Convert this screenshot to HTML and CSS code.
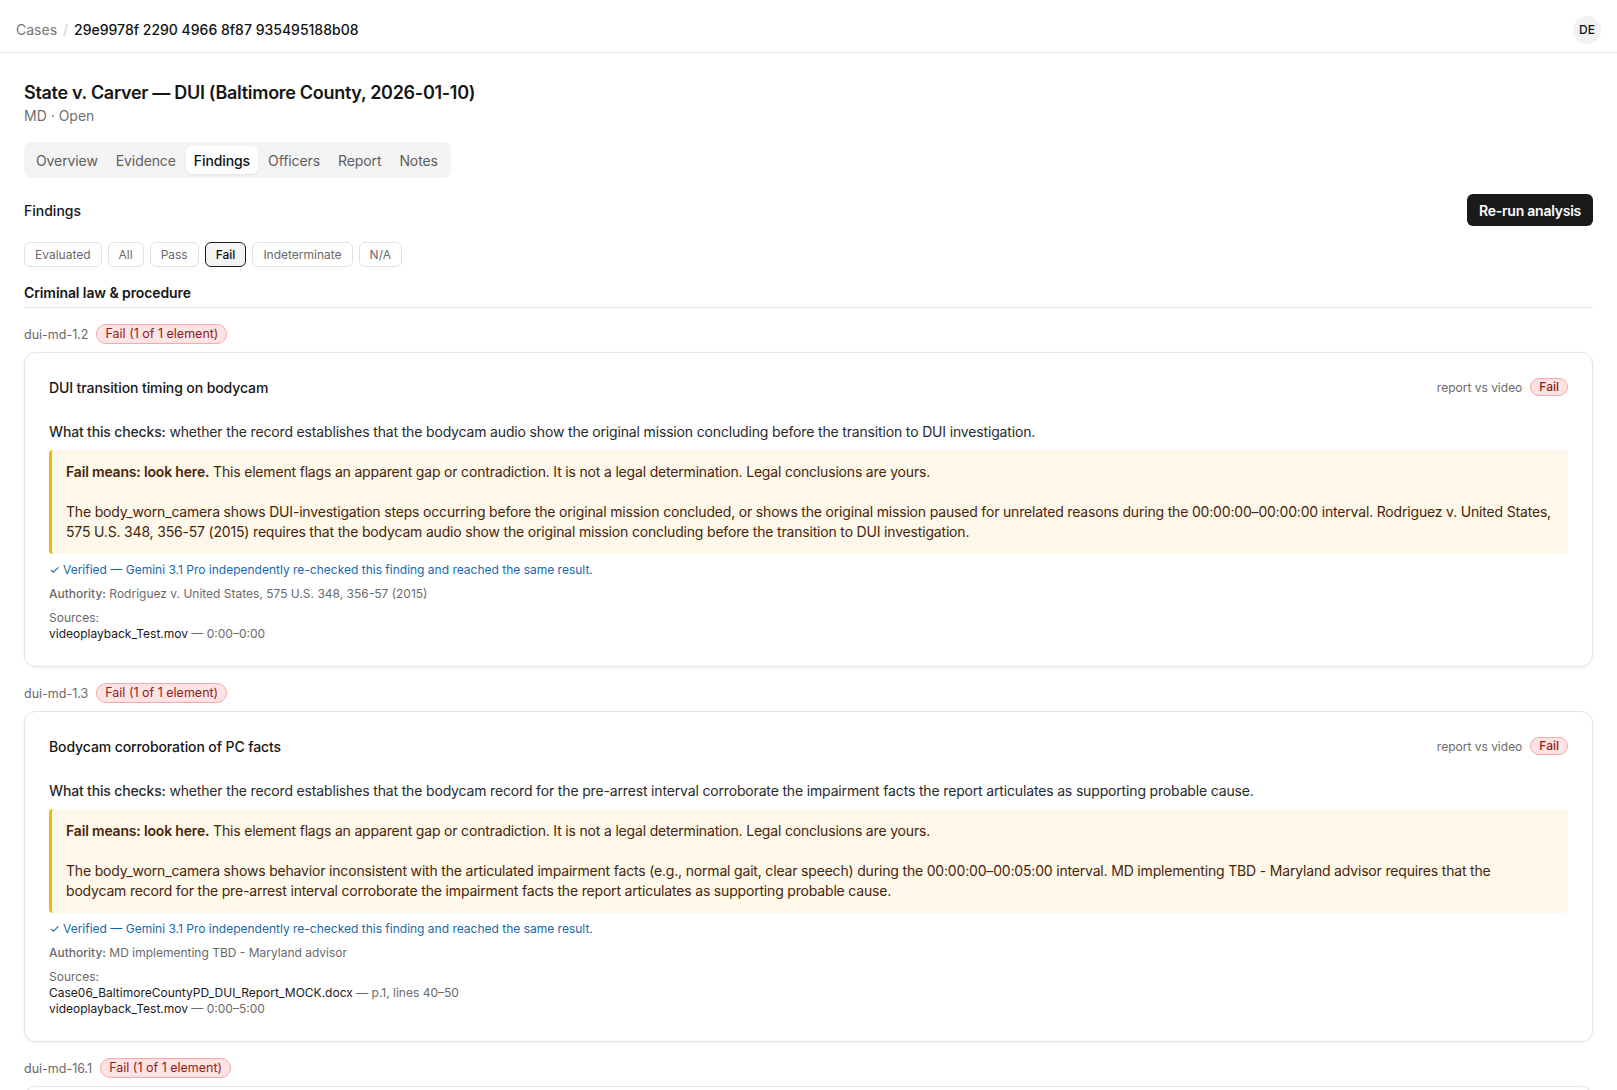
FILE: index.html
```html
<!DOCTYPE html>
<html lang="en">

<head>
    <meta charset="UTF-8">
    <meta name="viewport" content="width=device-width, initial-scale=1.0">
    <title>Case 29e9978f - Findings</title>
    <link rel="stylesheet" href="styles.css">
</head>

<body>
    <header class="topbar">
        <nav class="crumbs">
            <a class="crumb-link" href="#">Cases</a>
            <span class="crumb-sep">/</span>
            <span class="crumb-current">29e9978f 2290 4966 8f87 935495188b08</span>
        </nav>
        <div class="avatar">DE</div>
    </header>

    <main class="page">
        <h1 class="case-title">State v. Carver — DUI (Baltimore County, 2026-01-10)</h1>
        <div class="case-meta">MD · Open</div>

        <div class="tabs">
            <button class="tab">Overview</button>
            <button class="tab">Evidence</button>
            <button class="tab active">Findings</button>
            <button class="tab">Officers</button>
            <button class="tab">Report</button>
            <button class="tab">Notes</button>
        </div>

        <div class="findings-head">
            <h2>Findings</h2>
            <button class="btn-dark">Re-run analysis</button>
        </div>

        <div class="filters">
            <button class="chip">Evaluated</button>
            <button class="chip">All</button>
            <button class="chip">Pass</button>
            <button class="chip active">Fail</button>
            <button class="chip">Indeterminate</button>
            <button class="chip">N/A</button>
        </div>

        <section class="group">
            <h3 class="group-title">Criminal law &amp; procedure</h3>

            <div class="element">
                <div class="element-label">
                    <span class="element-id">dui-md-1.2</span>
                    <span class="badge-fail">Fail (1 of 1 element)</span>
                </div>
                <div class="card">
                    <div class="card-head">
                        <div class="card-title">DUI transition timing on bodycam</div>
                        <div class="card-tags">
                            <span class="mode">report vs video</span>
                            <span class="pill-fail">Fail</span>
                        </div>
                    </div>
                    <p class="checks"><b>What this checks:</b> whether the record establishes that the bodycam audio show the original mission concluding before the transition to DUI investigation.</p>
                    <div class="callout">
                        <p><b>Fail means: look here.</b> This element flags an apparent gap or contradiction. It is not a legal determination. Legal conclusions are yours.</p>
                        <p>The body_worn_camera shows DUI-investigation steps occurring before the original mission concluded, or shows the original mission paused for unrelated reasons during the 00:00:00–00:00:00 interval. Rodriguez v. United States, 575 U.S. 348, 356-57 (2015) requires that the bodycam audio show the original mission concluding before the transition to DUI investigation.</p>
                    </div>
                    <div class="verified">✓ Verified — Gemini 3.1 Pro independently re-checked this finding and reached the same result.</div>
                    <div class="authority"><b>Authority:</b> Rodriguez v. United States, 575 U.S. 348, 356-57 (2015)</div>
                    <div class="sources">
                        <div>Sources:</div>
                        <div class="src"><span class="src-file">videoplayback_Test.mov</span> — 0:00–0:00</div>
                    </div>
                </div>
            </div>

            <div class="element">
                <div class="element-label">
                    <span class="element-id">dui-md-1.3</span>
                    <span class="badge-fail">Fail (1 of 1 element)</span>
                </div>
                <div class="card">
                    <div class="card-head">
                        <div class="card-title">Bodycam corroboration of PC facts</div>
                        <div class="card-tags">
                            <span class="mode">report vs video</span>
                            <span class="pill-fail">Fail</span>
                        </div>
                    </div>
                    <p class="checks"><b>What this checks:</b> whether the record establishes that the bodycam record for the pre-arrest interval corroborate the impairment facts the report articulates as supporting probable cause.</p>
                    <div class="callout">
                        <p><b>Fail means: look here.</b> This element flags an apparent gap or contradiction. It is not a legal determination. Legal conclusions are yours.</p>
                        <p>The body_worn_camera shows behavior inconsistent with the articulated impairment facts (e.g., normal gait, clear speech) during the 00:00:00–00:05:00 interval. MD implementing TBD - Maryland advisor requires that the bodycam record for the pre-arrest interval corroborate the impairment facts the report articulates as supporting probable cause.</p>
                    </div>
                    <div class="verified">✓ Verified — Gemini 3.1 Pro independently re-checked this finding and reached the same result.</div>
                    <div class="authority"><b>Authority:</b> MD implementing TBD - Maryland advisor</div>
                    <div class="sources">
                        <div>Sources:</div>
                        <div class="src"><span class="src-file">Case06_BaltimoreCountyPD_DUI_Report_MOCK.docx</span> — p.1, lines 40–50</div>
                        <div class="src"><span class="src-file">videoplayback_Test.mov</span> — 0:00–5:00</div>
                    </div>
                </div>
            </div>

            <div class="element">
                <div class="element-label">
                    <span class="element-id">dui-md-16.1</span>
                    <span class="badge-fail">Fail (1 of 1 element)</span>
                </div>
                <div class="card">
                    <div class="card-head">
                        <div class="card-title">Implied consent advisement</div>
                        <div class="card-tags">
                            <span class="mode">report vs video</span>
                            <span class="pill-fail">Fail</span>
                        </div>
                    </div>
                </div>
            </div>
        </section>
    </main>
</body>

</html>
```

FILE: styles.css
```css
* {
    box-sizing: border-box;
}

body {
    margin: 0;
    font-family: Inter, "Noto Sans", sans-serif;
    font-size: 14px;
    color: #161616;
    background: #fff;
}

button {
    font-family: inherit;
    cursor: pointer;
}

.topbar {
    height: 53px;
    display: flex;
    align-items: center;
    justify-content: space-between;
    padding: 7px 16px 0;
    border-bottom: 1px solid #e6e6e6;
}

.crumbs {
    display: flex;
    align-items: center;
    gap: 6px;
    font-size: 14px;
}

.crumb-link {
    color: #757575;
    text-decoration: none;
}

.crumb-sep {
    color: #cfcfcf;
}

.crumb-current {
    color: #111;
    font-weight: 500;
}

.avatar {
    width: 28px;
    height: 28px;
    border-radius: 50%;
    background: #f2f2f2;
    display: flex;
    align-items: center;
    justify-content: center;
    font-size: 12px;
    font-weight: 500;
    color: #111;
}

.page {
    padding: 26px 24px 40px;
}

.case-title {
    margin: 0;
    font-size: 18px;
    line-height: 28px;
    font-weight: 600;
    letter-spacing: -0.3px;
}

.case-meta {
    margin-top: -1px;
    color: #6f6f6f;
    line-height: 20px;
}

.tabs {
    display: inline-flex;
    gap: 2px;
    margin-top: 16px;
    padding: 4px 5px 4px 4px;
    background: #f4f4f5;
    border-radius: 8px;
}

.tab {
    border: 0;
    background: none;
    height: 28px;
    padding: 0 8px;
    font-size: 14px;
    letter-spacing: -0.1px;
    color: #5e5e5e;
    border-radius: 6px;
}

.tab.active {
    background: #fff;
    color: #111;
    font-weight: 500;
    box-shadow: 0 1px 2px rgba(0, 0, 0, 0.08);
}

.findings-head {
    display: flex;
    align-items: center;
    justify-content: space-between;
    margin-top: 16px;
}

.findings-head h2 {
    margin: 0;
    font-size: 14px;
    font-weight: 500;
}

.btn-dark {
    height: 32px;
    padding: 0 12px;
    border: 0;
    border-radius: 6px;
    background: #1a1a1a;
    color: #fff;
    font-size: 14px;
    font-weight: 600;
    letter-spacing: -0.25px;
}

.filters {
    display: flex;
    gap: 6px;
    margin-top: 16px;
}

.chip {
    height: 25px;
    padding: 0 10px;
    border: 1px solid #e2e2e2;
    border-radius: 6px;
    background: #fff;
    color: #6a6a6a;
    font-size: 12px;
}

.chip.active {
    border-color: #1a1a1a;
    background: #f4f4f4;
    color: #111;
    font-weight: 500;
}

.group-title {
    margin: 16px 0 0;
    padding-bottom: 4px;
    border-bottom: 1px solid #e4e4e4;
    font-size: 14px;
    line-height: 20px;
    font-weight: 600;
    letter-spacing: -0.1px;
}

.element {
    margin-top: 16px;
}

.element-label {
    display: flex;
    align-items: center;
    gap: 8px;
    height: 20px;
}

.element-id {
    color: #6a6a6a;
    font-size: 12.5px;
}

.badge-fail {
    padding: 1px 8px;
    border: 1px solid #f6a9a9;
    border-radius: 999px;
    background: #fde3e3;
    color: #8c1d1d;
    font-size: 12.5px;
    line-height: 16px;
}

.card {
    margin-top: 8px;
    padding: 24px 24px 24px;
    border: 1px solid #e5e5e5;
    border-radius: 12px;
    background: #fff;
    box-shadow: 0 1px 3px rgba(0, 0, 0, 0.06);
}

.card-head {
    display: flex;
    align-items: center;
    justify-content: space-between;
    height: 20px;
}

.card-title {
    font-weight: 500;
    letter-spacing: -0.1px;
}

.card-tags {
    display: flex;
    align-items: center;
    gap: 8px;
}

.mode {
    color: #6a6a6a;
    font-size: 12px;
}

.pill-fail {
    padding: 0 8px;
    border: 1px solid #f6a9a9;
    border-radius: 999px;
    background: #fde3e3;
    color: #8c1d1d;
    font-size: 12px;
    font-weight: 500;
    line-height: 16px;
}

.checks {
    margin: 25px 0 0;
    line-height: 20px;
    color: #2a2a2a;
    letter-spacing: -0.16px;
}

.checks b {
    font-weight: 500;
}

.callout {
    margin-top: 8px;
    padding: 12px 15px 12px 14px;
    border-left: 3px solid #f5b50a;
    border-radius: 4px;
    background: #fdf8e9;
    color: #4a2408;
    line-height: 20px;
    letter-spacing: -0.18px;
}

.callout p {
    margin: 0;
}

.callout p + p {
    margin-top: 20px;
}

.callout b {
    font-weight: 600;
}

.verified {
    margin-top: 8px;
    color: #1768ad;
    font-size: 12px;
    line-height: 16px;
}

.authority,
.sources {
    margin-top: 8px;
    color: #6a6a6a;
    font-size: 12px;
    line-height: 16px;
}

.authority b {
    font-weight: 500;
}

.src-file {
    color: #1a1a1a;
}
```
